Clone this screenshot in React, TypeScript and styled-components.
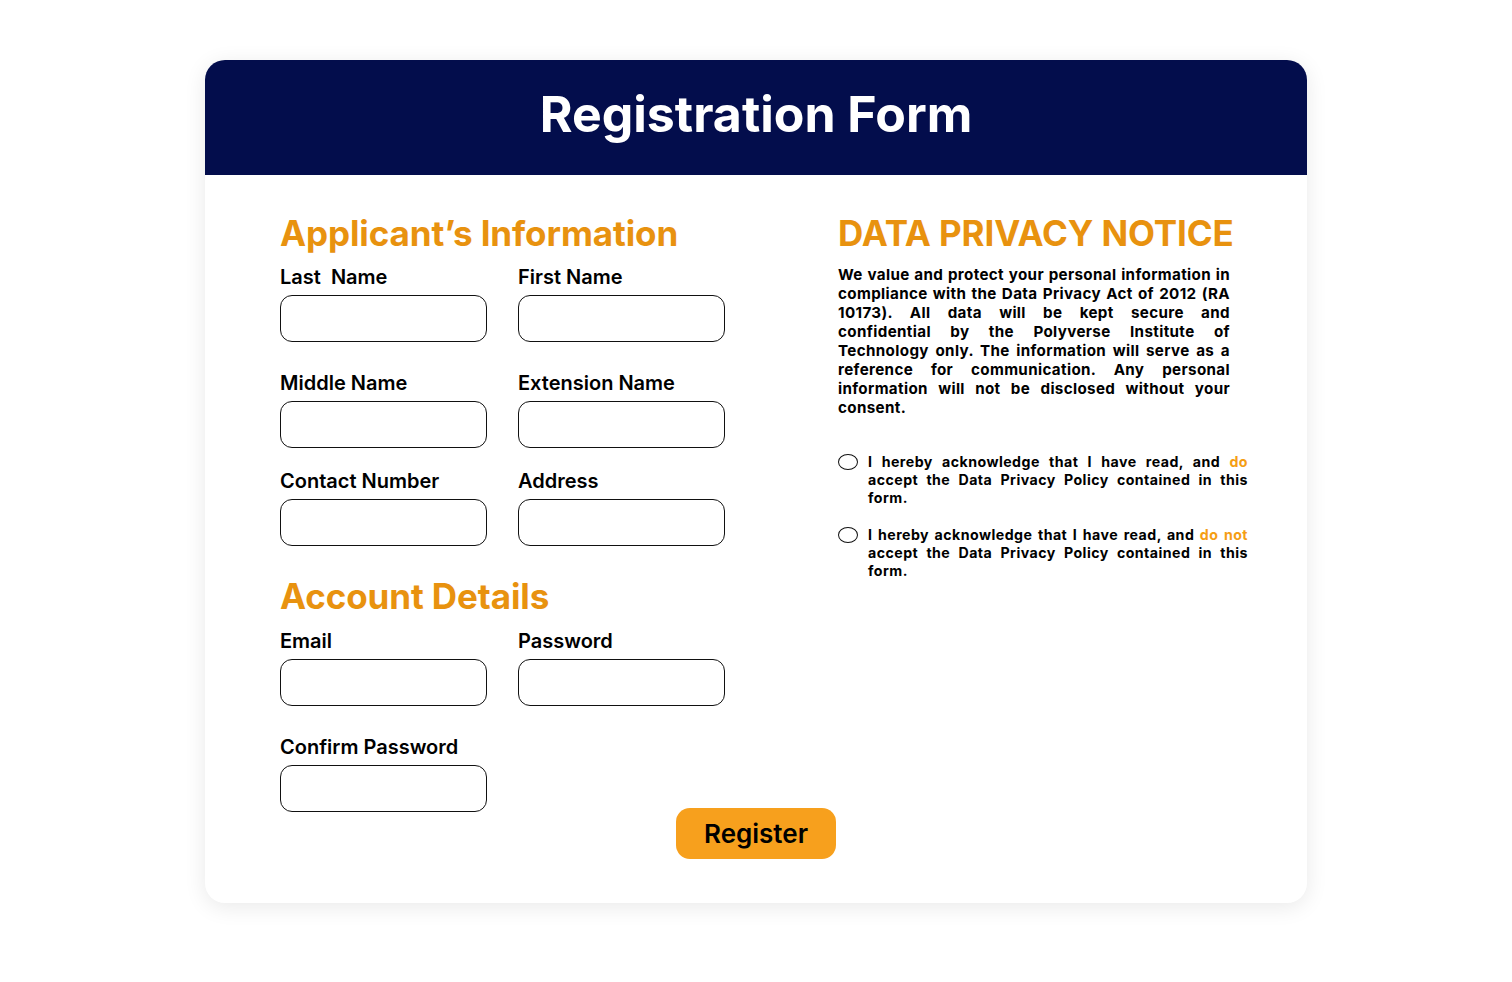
import React from "react";
import styled, { createGlobalStyle } from "styled-components";

const Global = createGlobalStyle`
  html, body { margin: 0; padding: 0; background: #ffffff; }
  body { font-family: Inter, "Noto Sans", sans-serif; color: #000; }
  * { box-sizing: border-box; }
`;

const Page = styled.div`
  width: 1512px;
  min-height: 982px;
  padding-top: 60px;
  display: flex;
  justify-content: center;
  align-items: flex-start;
`;

const Card = styled.div`
  width: 1102px;
  background: #fff;
  border-radius: 20px;
  box-shadow: 0 4px 22px rgba(0, 0, 0, 0.09);
  padding-bottom: 44px;
`;

const Header = styled.div`
  height: 115px;
  padding-bottom: 8px;
  background: #030d4c;
  border-radius: 20px 20px 0 0;
  display: flex;
  align-items: center;
  justify-content: center;
`;

const Title = styled.h1`
  margin: 0;
  color: #fff;
  font-size: 50px;
  font-weight: 700;
  letter-spacing: 0;
`;

const Body = styled.div`
  display: grid;
  grid-template-columns: 446px 410px;
  column-gap: 112px;
  padding: 36px 0 0 75px;
`;

const Column = styled.div`
  display: flex;
  flex-direction: column;
`;

const SectionTitle = styled.h2<{ $top?: number }>`
  margin: ${(p) => p.$top ?? 0}px 0 0 0;
  color: #e8920f;
  font-size: 35px;
  font-weight: 700;
  line-height: 44px;
  letter-spacing: -0.1px;
`;

const FieldGrid = styled.div<{ $top?: number }>`
  display: grid;
  grid-template-columns: 207px 207px;
  column-gap: 31px;
  margin-top: ${(p) => p.$top ?? 9}px;
`;

const Field = styled.div<{ $mt?: number }>`
  display: flex;
  flex-direction: column;
  margin-top: ${(p) => p.$mt ?? 0}px;
`;

const Label = styled.label`
  font-size: 20px;
  font-weight: 600;
  line-height: 26px;
  white-space: pre;
  margin-bottom: 5px;
`;

const Input = styled.input`
  width: 207px;
  height: 47px;
  border: 1px solid #111;
  border-radius: 12px;
  background: #fff;
  outline: none;
  font-family: inherit;
`;

const Notice = styled.p`
  margin: 10px 0 0 0;
  width: 392px;
  font-size: 15.2px;
  font-weight: 700;
  line-height: 19px;
  letter-spacing: 0.35px;
  text-align: justify;
`;

const Options = styled.div`
  display: flex;
  flex-direction: column;
  gap: 19px;
  margin-top: 36px;
`;

const Option = styled.label`
  display: flex;
  align-items: flex-start;
  gap: 10px;
`;

const Radio = styled.span`
  flex: none;
  width: 20px;
  height: 16px;
  margin-top: 1px;
  border: 1.3px solid #111;
  border-radius: 50%;
`;

const OptionText = styled.span`
  width: 380px;
  font-size: 14.2px;
  font-weight: 700;
  line-height: 18px;
  letter-spacing: 0.45px;
  text-align: justify;
`;

const Accent = styled.span`
  color: #f59e14;
`;

const ButtonRow = styled.div`
  display: flex;
  justify-content: center;
  margin-top: -4px;
`;

const Button = styled.button`
  width: 160px;
  height: 51px;
  border: none;
  border-radius: 14px;
  background: #f7a01d;
  color: #000;
  font-family: inherit;
  font-size: 26px;
  font-weight: 600;
  cursor: pointer;
`;

const personal: { label: string; mt: number }[] = [
  { label: "Last  Name", mt: 0 },
  { label: "First Name", mt: 0 },
  { label: "Middle Name", mt: 28 },
  { label: "Extension Name", mt: 28 },
  { label: "Contact Number", mt: 20 },
  { label: "Address", mt: 20 },
];

const account: { label: string; mt: number; type: string }[] = [
  { label: "Email", mt: 0, type: "text" },
  { label: "Password", mt: 0, type: "password" },
  { label: "Confirm Password", mt: 28, type: "password" },
];

const App: React.FC = () => {
  return (
    <>
      <Global />
      <Page>
        <Card>
          <Header>
            <Title>Registration Form</Title>
          </Header>
          <Body>
            <Column>
              <SectionTitle>Applicant’s Information</SectionTitle>
              <FieldGrid>
                {personal.map((f) => (
                  <Field key={f.label} $mt={f.mt}>
                    <Label>{f.label}</Label>
                    <Input type="text" />
                  </Field>
                ))}
              </FieldGrid>
              <SectionTitle $top={28}>Account Details</SectionTitle>
              <FieldGrid $top={10}>
                {account.map((f) => (
                  <Field key={f.label} $mt={f.mt}>
                    <Label>{f.label}</Label>
                    <Input type={f.type} />
                  </Field>
                ))}
              </FieldGrid>
            </Column>
            <Column>
              <SectionTitle>DATA PRIVACY NOTICE</SectionTitle>
              <Notice>
                We value and protect your personal information in compliance with the Data Privacy Act of 2012 (RA
                10173). All data will be kept secure and confidential by the Polyverse Institute of Technology only. The
                information will serve as a reference for communication. Any personal information will not be disclosed
                without your consent.
              </Notice>
              <Options>
                <Option>
                  <Radio />
                  <OptionText>
                    I hereby acknowledge that I have read, and <Accent>do</Accent> accept the Data Privacy Policy
                    contained in this form.
                  </OptionText>
                </Option>
                <Option>
                  <Radio />
                  <OptionText>
                    I hereby acknowledge that I have read, and <Accent>do not</Accent> accept the Data Privacy Policy
                    contained in this form.
                  </OptionText>
                </Option>
              </Options>
            </Column>
          </Body>
          <ButtonRow>
            <Button>Register</Button>
          </ButtonRow>
        </Card>
      </Page>
    </>
  );
};

export default App;
